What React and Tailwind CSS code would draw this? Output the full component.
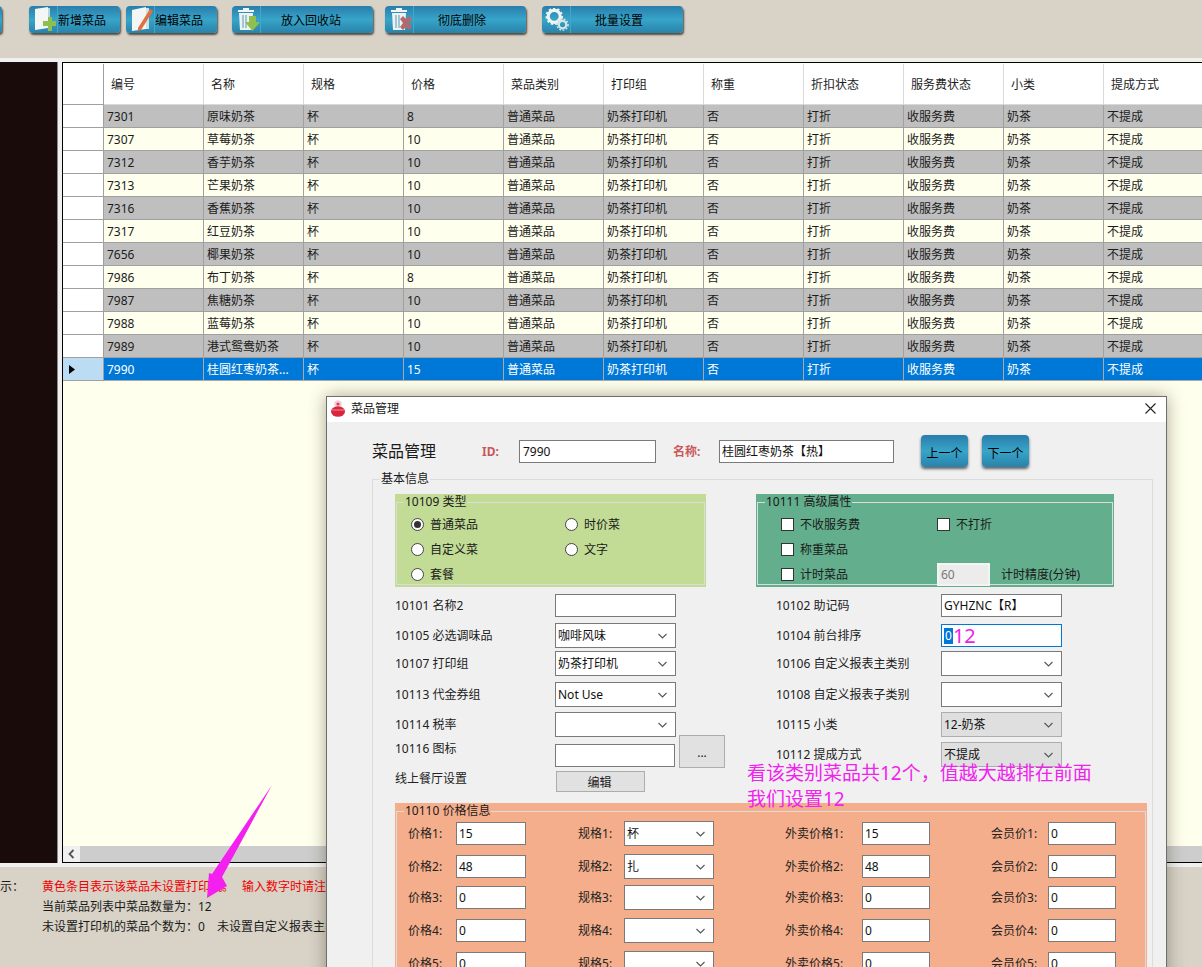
import React from 'react';

const columns = ['编号', '名称', '规格', '价格', '菜品类别', '打印组', '称重', '折扣状态', '服务费状态', '小类', '提成方式'];

const dishes = [
    ['7301', '原味奶茶', '8'],
    ['7307', '草莓奶茶', '10'],
    ['7312', '香芋奶茶', '10'],
    ['7313', '芒果奶茶', '10'],
    ['7316', '香蕉奶茶', '10'],
    ['7317', '红豆奶茶', '10'],
    ['7656', '椰果奶茶', '10'],
    ['7986', '布丁奶茶', '8'],
    ['7987', '焦糖奶茶', '10'],
    ['7988', '蓝莓奶茶', '10'],
    ['7989', '港式鸳鸯奶茶', '10'],
    ['7990', '桂圆红枣奶茶...', '15'],
];

const prices = [
    { no: 1, price: '15', spec: '杯', out: '15', member: '0', gap: 'mb-[8px]' },
    { no: 2, price: '48', spec: '扎', out: '48', member: '0', gap: 'mb-[6px]' },
    { no: 3, price: '0', spec: '', out: '0', member: '0', gap: 'mb-[8px]' },
    { no: 4, price: '0', spec: '', out: '0', member: '0', gap: 'mb-[8px]' },
    { no: 5, price: '0', spec: '', out: '0', member: '0', gap: 'mb-[8px]' },
];

function NewIcon() {
    return (
        <svg width="24" height="26" viewBox="0 0 24 26" className="shrink-0">
            <path d="M1 2 L14 0 V21 L1 23 Z" fill="#f4f6f6" />
            <path d="M14 1 H16 V13 H14 Z" fill="#b9d5e0" />
            <path d="M13 12 H18 V8 H22 V12 H26 V17 H22 V22 H18 V17 H13 Z" fill="#8fbf4e" transform="translate(-4 2)" />
        </svg>
    );
}

function EditIcon() {
    return (
        <svg width="24" height="26" viewBox="0 0 24 26" className="shrink-0">
            <path d="M1 3 L15 0 V22 L1 24 Z" fill="#f4f6f6" />
            <path d="M15 1 H18 V22 H15 Z" fill="#cfe2ea" />
            <path d="M19 2 L22 4 L10 23 L7 24 L7 21 Z" fill="#e0703c" />
        </svg>
    );
}

function TrashBase() {
    return (
        <>
            <path d="M1 3 H17 V5 H1 Z M6 1 H12 V3 H6 Z" fill="#f2f5f5" />
            <path d="M2 6 H16 L15 23 H3 Z" fill="#eef2f3" />
            <path d="M6 8 V21 M9 8 V21" stroke="#7fb4c8" strokeWidth="1.4" />
        </>
    );
}

function RecycleIcon() {
    return (
        <svg width="26" height="26" viewBox="0 0 26 26" className="shrink-0">
            <TrashBase />
            <path d="M12 9 H19 V15 H23 L15.5 24 L8 15 H12 Z" fill="#8fbf4e" />
        </svg>
    );
}

function DeleteIcon() {
    return (
        <svg width="26" height="26" viewBox="0 0 26 26" className="shrink-0">
            <TrashBase />
            <path d="M10 12 L13 9 L16 12 L19 9 L22 12 L19 16 L22 20 L19 23 L16 20 L13 23 L10 20 L13 16 Z" fill="#b26a6e" />
        </svg>
    );
}

function GearIcon() {
    return (
        <svg width="24" height="24" viewBox="0 0 26 26" className="-ml-[2px] shrink-0">
            <circle cx="10" cy="9" r="6.5" fill="none" stroke="#eef3f3" strokeWidth="3.4" />
            <circle cx="10" cy="9" r="8.5" fill="none" stroke="#eef3f3" strokeWidth="2" strokeDasharray="2.6 2.2" />
            <circle cx="19" cy="18" r="4" fill="none" stroke="#d5e4e6" strokeWidth="2.4" />
            <circle cx="19" cy="18" r="6" fill="none" stroke="#d5e4e6" strokeWidth="1.6" strokeDasharray="2 1.6" />
        </svg>
    );
}

function ToolButton({ icon, label, width, textLeft }) {
    return (
        <div className={`relative flex h-[27px] shrink-0 items-center rounded-[4px] bg-gradient-to-b from-[#2a7dab] via-[#37a5c9] to-[#2a82aa] text-black shadow-[1px_2px_2px_rgba(40,30,20,0.75)] ${width}`}>
            <div className="flex h-full w-[29px] shrink-0 items-center border-r border-[#3fa9cb] pl-[5px]">{icon}</div>
            <span className={`pt-[2px] ${textLeft}`}>{label}</span>
        </div>
    );
}

function Toolbar() {
    return (
        <div className="flex h-[58px] items-start pt-[6px]">
            <div className="-ml-[18px] mr-[27px] h-[27px] w-[20px] shrink-0 rounded-[4px] bg-gradient-to-b from-[#2a7dab] via-[#37a5c9] to-[#2a82aa] shadow-[1px_2px_2px_rgba(40,30,20,0.75)]" />
            <ToolButton icon={<NewIcon />} label="新增菜品" width="w-[91px]" textLeft="pl-[0px]" />
            <div className="w-[6px] shrink-0" />
            <ToolButton icon={<EditIcon />} label="编辑菜品" width="w-[91px]" textLeft="pl-[0px]" />
            <div className="w-[15px] shrink-0" />
            <ToolButton icon={<RecycleIcon />} label="放入回收站" width="w-[141px]" textLeft="pl-[20px]" />
            <div className="w-[12px] shrink-0" />
            <ToolButton icon={<DeleteIcon />} label="彻底删除" width="w-[141px]" textLeft="pl-[24px]" />
            <div className="w-[16px] shrink-0" />
            <ToolButton icon={<GearIcon />} label="批量设置" width="w-[141px]" textLeft="pl-[24px]" />
        </div>
    );
}

function DishRow({ dish, index }) {
    const selected = index === dishes.length - 1;
    const grey = index % 2 === 0;
    const cells = [dish[0], dish[1], '杯', dish[2], '普通菜品', '奶茶打印机', '否', '打折', '收服务费', '奶茶', '不提成'];
    const rowColor = selected
        ? 'bg-[#0078d7] text-white border-[#a9a9a9]'
        : grey
          ? 'bg-[#bfbfbf] text-[#1c1c1c] border-[#a0a0a0]'
          : 'bg-[#ffffee] text-[#1c1c1c] border-[#a0a0a0]';
    return (
        <div className="flex h-[23px]">
            <div className={`flex w-[41px] shrink-0 items-center border-b border-r border-[#a0a0a0] pl-[6px] ${selected ? 'bg-[#bcdcf4]' : 'bg-white'}`}>
                {selected && (
                    <svg width="6" height="9" viewBox="0 0 6 9">
                        <path d="M0 0 L6 4.5 L0 9 Z" fill="#000" />
                    </svg>
                )}
            </div>
            {cells.map((cell, i) => (
                <div key={i} className={`w-[100px] shrink-0 border-b border-r pl-[3px] leading-[23px] ${rowColor}`}>
                    {cell}
                </div>
            ))}
        </div>
    );
}

function DishGrid() {
    return (
        <div className="flex flex-1 flex-col overflow-hidden border-y border-l border-black bg-[#ffffee] pt-[1px]">
            <div className="flex h-[41px] bg-white">
                <div className="w-[41px] shrink-0 border-b border-r border-[#a0a0a0]" />
                {columns.map((name) => (
                    <div key={name} className="w-[100px] shrink-0 border-b border-r border-[#d9d9d9] pl-[7px] leading-[41px] text-[#1c1c1c]">
                        {name}
                    </div>
                ))}
            </div>
            {dishes.map((dish, i) => (
                <DishRow key={dish[0]} dish={dish} index={i} />
            ))}
            <div className="flex-1" />
            <div className="flex h-[16px] bg-[#cdcdcd]">
                <div className="flex w-[17px] items-center justify-center bg-[#f0f0f0]">
                    <svg width="7" height="10" viewBox="0 0 7 10">
                        <path d="M5.5 1 L1.5 5 L5.5 9" fill="none" stroke="#555" strokeWidth="1.8" />
                    </svg>
                </div>
            </div>
        </div>
    );
}

function Chevron() {
    return (
        <svg width="9" height="6" viewBox="0 0 9 6" className="shrink-0">
            <path d="M0.5 1 L4.5 5 L8.5 1" fill="none" stroke="#555" strokeWidth="1.1" />
        </svg>
    );
}

function TextBox({ value, className = 'w-[121px]' }) {
    return <div className={`h-[23px] shrink-0 border border-[#7a7a7a] bg-white pl-[2px] leading-[21px] text-[#111] ${className}`}>{value}</div>;
}

function Select({ value, className = 'w-[121px]', disabled = false }) {
    return (
        <div className={`flex h-[25px] shrink-0 items-center justify-between border pl-[2px] pr-[8px] text-[#111] ${disabled ? 'border-[#adadad] bg-[#dfdfdf]' : 'border-[#7a7a7a] bg-white'} ${className}`}>
            <span>{value}</span>
            <Chevron />
        </div>
    );
}

function Radio({ label, checked }) {
    return (
        <div className="flex items-center gap-[6px]">
            <span className="flex h-[13px] w-[13px] items-center justify-center rounded-full border border-[#444] bg-white">
                {checked && <span className="h-[7px] w-[7px] rounded-full bg-[#333]" />}
            </span>
            <span>{label}</span>
        </div>
    );
}

function Check({ label }) {
    return (
        <div className="flex items-center gap-[6px]">
            <span className="h-[13px] w-[13px] border border-[#333] bg-white" />
            <span>{label}</span>
        </div>
    );
}

function GroupBox({ title, className, inner, children }) {
    return (
        <div className={`shrink-0 px-[1px] pb-[2px] ${className}`}>
            <fieldset className="h-full border border-[#dcdcdc]">
                <legend className="ml-[7px] px-[1px] leading-[16px] text-[#1a1a1a]">{title}</legend>
                <div className={inner}>{children}</div>
            </fieldset>
        </div>
    );
}

function Label({ children, className = 'w-[160px]' }) {
    return <span className={`shrink-0 text-[#222] ${className}`}>{children}</span>;
}

function NavButton({ label }) {
    return (
        <div className="h-[32px] w-[47px] shrink-0 rounded-[4px] bg-gradient-to-b from-[#2a7dab] via-[#37a5c9] to-[#2a82aa] text-center leading-[38px] text-black shadow-[0_2px_3px_rgba(0,0,0,0.6)]">
            {label}
        </div>
    );
}

function BasicInfo() {
    return (
        <>
            <div className="mt-[7px] flex gap-[50px]">
                <GroupBox title="10109 类型" className="h-[93px] w-[311px] bg-[#c2dc96]" inner="grid grid-cols-[154px_1fr] auto-rows-[25px] items-center pl-[14px] pt-[2px]">
                    <Radio label="普通菜品" checked />
                    <Radio label="时价菜" />
                    <Radio label="自定义菜" />
                    <Radio label="文字" />
                    <Radio label="套餐" />
                </GroupBox>
                <GroupBox title="10111 高级属性" className="h-[93px] w-[358px] bg-[#63ae8c]" inner="grid grid-cols-[156px_1fr] auto-rows-[25px] items-center pl-[23px] pt-[2px]">
                    <Check label="不收服务费" />
                    <Check label="不打折" />
                    <Check label="称重菜品" />
                    <div />
                    <Check label="计时菜品" />
                    <div className="flex items-center">
                        <div className="h-[23px] w-[53px] border-2 border-[#f4f4f4] bg-[#ececec] pl-[2px] leading-[19px] text-[#777]">60</div>
                        <span className="ml-[11px]">计时精度(分钟)</span>
                    </div>
                </GroupBox>
            </div>

            <div className="mt-[7px] flex h-[29px] items-start">
                <div className="flex w-[381px] items-center">
                    <Label>10101 名称2</Label>
                    <TextBox />
                </div>
                <div className="flex items-center">
                    <Label className="w-[165px]">10102 助记码</Label>
                    <TextBox value="GYHZNC【R】" />
                </div>
            </div>

            <div className="flex h-[28px] items-start">
                <div className="flex w-[381px] items-center">
                    <Label>10105 必选调味品</Label>
                    <Select value="咖啡风味" />
                </div>
                <div className="mt-[1px] flex items-center">
                    <Label className="w-[165px]">10104 前台排序</Label>
                    <div className="flex h-[23px] w-[121px] items-center border border-[#0078d7] bg-white pl-[2px]">
                        <span className="bg-[#0078d7] px-[1px] leading-[16px] text-white">0</span>
                        <span className="text-[20px] leading-[20px] text-[#f020e8]">12</span>
                    </div>
                </div>
            </div>

            <div className="flex h-[31px] items-start">
                <div className="flex w-[381px] items-center">
                    <Label>10107 打印组</Label>
                    <Select value="奶茶打印机" />
                </div>
                <div className="flex items-center">
                    <Label className="w-[165px]">10106 自定义报表主类别</Label>
                    <Select />
                </div>
            </div>

            <div className="flex h-[30px] items-start">
                <div className="flex w-[381px] items-center">
                    <Label>10113 代金券组</Label>
                    <Select value="Not Use" />
                </div>
                <div className="flex items-center">
                    <Label className="w-[165px]">10108 自定义报表子类别</Label>
                    <Select />
                </div>
            </div>

            <div className="flex h-[30px] items-start">
                <div className="flex w-[381px] items-center">
                    <Label>10114 税率</Label>
                    <Select />
                </div>
                <div className="flex items-center">
                    <Label className="w-[165px]">10115 小类</Label>
                    <Select value="12-奶茶" disabled />
                </div>
            </div>

            <div className="flex h-[29px] items-start">
                <div className="flex w-[381px] items-start">
                    <Label className="-mt-[1px] w-[160px] leading-[16px]">10116 图标</Label>
                    <div className="mt-[2px]">
                        <TextBox className="w-[120px]" />
                    </div>
                    <div className="-mt-[7px] ml-[4px] h-[33px] w-[46px] border border-[#adadad] bg-[#e1e1e1] text-center leading-[33px] text-[#222]">...</div>
                </div>
                <div className="flex items-center">
                    <Label className="w-[165px]">10112 提成方式</Label>
                    <Select value="不提成" disabled />
                </div>
            </div>

            <div className="flex h-[32px] items-start">
                <Label className="w-[161px] leading-[16px]">线上餐厅设置</Label>
                <div className="h-[21px] w-[89px] border border-[#adadad] bg-[#e1e1e1] pr-[2px] text-center leading-[21px] text-[#222]">编辑</div>
            </div>
        </>
    );
}

function PriceInfo() {
    return (
        <GroupBox title="10110 价格信息" className="w-[752px] bg-[#f5ae8c]" inner="flex flex-col pl-[11px] pt-[2px]">
            {prices.map((row) => (
                <div key={row.no} className={`flex h-[25px] items-center ${row.gap}`}>
                    <Label className="w-[48px]">价格{row.no}:</Label>
                    <TextBox value={row.price} className="w-[70px]" />
                    <div className="w-[52px] shrink-0" />
                    <Label className="w-[46px]">规格{row.no}:</Label>
                    <Select value={row.spec} className="w-[90px]" />
                    <div className="w-[71px] shrink-0" />
                    <Label className="w-[77px]">外卖价格{row.no}:</Label>
                    <TextBox value={row.out} className="w-[68px]" />
                    <div className="w-[61px] shrink-0" />
                    <Label className="w-[57px]">会员价{row.no}:</Label>
                    <TextBox value={row.member} className="w-[68px]" />
                </div>
            ))}
        </GroupBox>
    );
}

function DishDialog() {
    return (
        <div className="absolute left-[326px] top-[396px] w-[841px] border border-[#6e6e6e] bg-[#f0f0f0] text-[#1a1a1a] shadow-[0_0_16px_rgba(60,60,30,0.45)]">
            <div className="flex h-[25px] items-center justify-between bg-white pb-[2px] pl-[4px] pr-[10px]">
                <div className="flex items-center gap-[6px]">
                    <svg width="14" height="17" viewBox="0 0 14 17">
                        <circle cx="7" cy="4" r="3.8" fill="#f4cfd8" />
                        <circle cx="7" cy="4" r="1.6" fill="#d8405a" />
                        <ellipse cx="7" cy="11.5" rx="7" ry="5.2" fill="#d9263c" />
                        <path d="M1 10 H13" stroke="#f08a96" strokeWidth="1" />
                    </svg>
                    <span>菜品管理</span>
                </div>
                <svg width="11" height="11" viewBox="0 0 11 11">
                    <path d="M0.5 0.5 L10.5 10.5 M10.5 0.5 L0.5 10.5" stroke="#222" strokeWidth="1.1" />
                </svg>
            </div>

            <div className="pl-[45px]">
                <div className="flex h-[49px] items-start pt-[13px]">
                    <span className="mt-[4px] w-[110px] shrink-0 text-[16px] leading-[24px]">菜品管理</span>
                    <span className="mt-[5px] w-[37px] shrink-0 font-bold leading-[23px] text-[#c9585a]">ID:</span>
                    <div className="mt-[5px]">
                        <TextBox value="7990" className="w-[137px] pl-[3px]" />
                    </div>
                    <span className="ml-[17px] mt-[5px] w-[46px] shrink-0 font-bold leading-[23px] text-[#c9585a]">名称:</span>
                    <div className="mt-[5px]">
                        <TextBox value="桂圆红枣奶茶【热】" className="w-[175px]" />
                    </div>
                    <div className="ml-[27px] flex gap-[14px]">
                        <NavButton label="上一个" />
                        <NavButton label="下一个" />
                    </div>
                </div>

                <fieldset className="h-[560px] w-[781px] border border-[#dcdcdc]">
                    <legend className="ml-[7px] px-[1px] leading-[16px]">基本信息</legend>
                    <div className="pl-[22px]">
                        <BasicInfo />
                        <PriceInfo />
                    </div>
                </fieldset>
            </div>
        </div>
    );
}

export default function App() {
    return (
        <div className="relative h-[967px] w-[1202px] overflow-hidden bg-[#d8d2c7] font-['Noto_Sans','Noto_Sans_CJK_SC',sans-serif] text-[12px] text-[#1a1a1a]">
            <Toolbar />

            <div className="h-[809px] bg-[#f0f0f0] py-[4px]">
                <div className="flex h-full">
                    <div className="w-[58px] shrink-0 border-r border-[#8a8a8a] bg-[#1a0b0b]" />
                    <div className="w-[4px] shrink-0" />
                    <DishGrid />
                </div>
            </div>

            <div className="pt-[10px] leading-[20px]">
                <div className="flex">
                    <span className="-ml-[12px] w-[54px] shrink-0">{'提示\uFF1A'}</span>
                    <span className="w-[200px] shrink-0 text-[#f00000]">黄色条目表示该菜品未设置打印机。</span>
                    <span className="text-[#f00000]">输入数字时请注意</span>
                </div>
                <div className="pl-[42px]">{'当前菜品列表中菜品数量为\uFF1A12'}</div>
                <div className="flex pl-[42px]">
                    <span>{'未设置打印机的菜品个数为\uFF1A0'}</span>
                    <span className="ml-[12px]">未设置自定义报表主类别</span>
                </div>
            </div>

            <DishDialog />

            <div className="absolute left-[747px] top-[760px] text-[19px] leading-[26px] text-[#f022ee]">
                <div>{'看该类别菜品共12个\uFF0C值越大越排在前面'}</div>
                <div>我们设置12</div>
            </div>

            <svg className="absolute left-[200px] top-[780px]" width="80" height="124" viewBox="200 780 80 124">
                <path d="M272 785 L222 877 L227 886 L207 898 L209 873 L212 874 Z" fill="#f320f0" />
            </svg>
        </div>
    );
}
